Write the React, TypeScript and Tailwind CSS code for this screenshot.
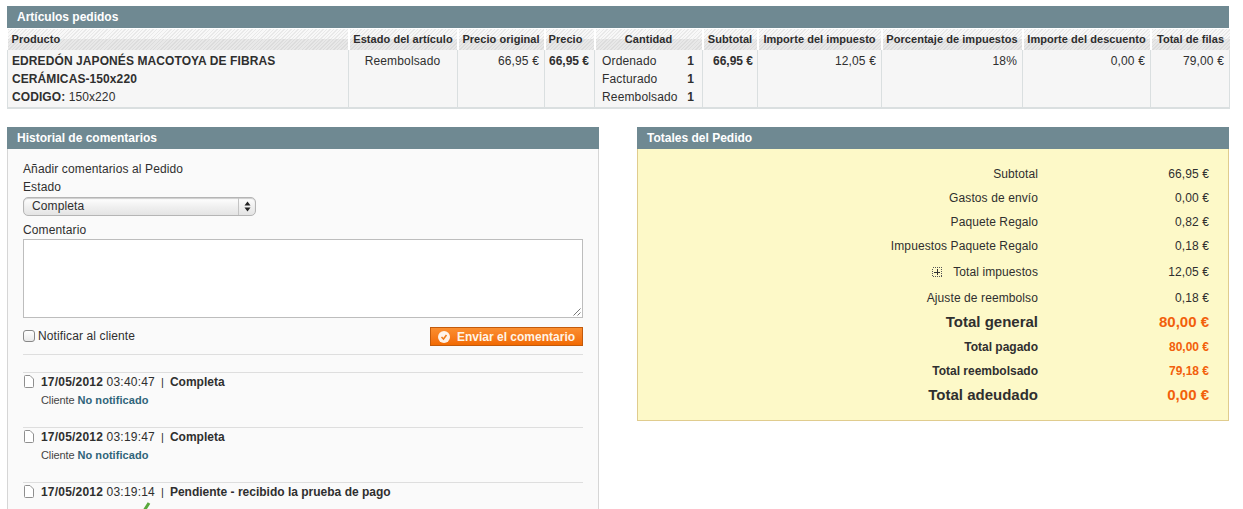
import React from "react";

const cols = [
  { label: "Producto", w: 341, left: "pl-[4px]" },
  { label: "Estado del artículo", w: 109 },
  { label: "Precio original", w: 87 },
  { label: "Precio", w: 50, left: "pl-[3px]" },
  { label: "Cantidad", w: 108 },
  { label: "Subtotal", w: 55 },
  { label: "Importe del impuesto", w: 124 },
  { label: "Porcentaje de impuestos", w: 141 },
  { label: "Importe del descuento", w: 128 },
  { label: "Total de filas", w: 79 },
];

function PanelHead({ children }: { children: React.ReactNode }) {
  return (
    <div className="h-[22px] bg-[#6f8992] pl-[10px] text-[12px] leading-[22px] font-bold text-white">
      {children}
    </div>
  );
}

function Th({ label, left }: { label: string; left?: string }) {
  return (
    <th className="h-[21px] border-r-2 border-white bg-[repeating-linear-gradient(135deg,#e9e9e9_0px,#e9e9e9_1px,#f8f8f8_1px,#f8f8f8_2.500px)] p-0 align-top last:border-r-0">
      <div className="h-[10px]" />
      <div
        className={`h-[11px] bg-[repeating-linear-gradient(135deg,#dcdcdc_0px,#dcdcdc_1px,#e8e8e8_1px,#e8e8e8_2.500px)] text-[11px] leading-[7px] font-bold tracking-[0.05px] whitespace-nowrap text-[#2d2d2d] ${
          left ? `text-left ${left}` : "text-center"
        }`}
      >
        <span className="relative -top-[3px]">{label}</span>
      </div>
    </th>
  );
}

function Td({
  children,
  className = "",
}: {
  children?: React.ReactNode;
  className?: string;
}) {
  return (
    <td
      className={`border-r border-[#dadfe0] pt-[2px] align-top text-[12px] leading-[18px] whitespace-nowrap text-[#2f2f2f] last:border-r-0 ${className}`}
    >
      {children}
    </td>
  );
}

function TotalRow({
  label,
  value,
  labelClass = "text-[12px] tracking-[0.1px]",
  valueClass = "text-[12px] tracking-[0.1px]",
  h,
  icon,
}: {
  label: string;
  value: string;
  labelClass?: string;
  valueClass?: string;
  h: string;
  icon?: boolean;
}) {
  return (
    <div className={`flex items-center ${h}`}>
      <div className={`flex w-[400px] items-center justify-end text-right text-[#2f2f2f] ${labelClass}`}>
        {icon && (
          <svg width="10" height="10" viewBox="0 0 10 10" className="mr-[11px]" shapeRendering="crispEdges">
            <rect x="0.5" y="0.5" width="9" height="9" fill="none" stroke="#555" strokeDasharray="1 1" />
            <path d="M2 5h6M5 2v6" stroke="#333" />
          </svg>
        )}
        {label}
      </div>
      <div className={`w-[171px] text-right ${valueClass}`}>{value}</div>
    </div>
  );
}

function PageIcon() {
  return (
    <svg width="11" height="13" viewBox="0 0 11 13" className="mt-[2px] shrink-0">
      <path d="M1.500 1.500a1 1 0 0 1 1-1H7l3.500 3.500v7.500a1 1 0 0 1-1 1h-7a1 1 0 0 1-1-1z" fill="#fff" stroke="#8f8f8f" />
    </svg>
  );
}

function HistoryHead({ date, time, status }: { date: string; time: string; status: string }) {
  return (
    <div className="flex h-[18px] items-start gap-[7px] text-[12px] leading-[18px] text-[#2f2f2f]">
      <PageIcon />
      <div className="whitespace-nowrap">
        <span className="tracking-[0.2px]">
          <b>{date}</b> {time}
        </span>
        <span className="mx-[6px] inline-block w-[3px] text-center text-[11px]">|</span>
        <b>{status}</b>
      </div>
    </div>
  );
}

function HistoryItem({ date, time, status }: { date: string; time: string; status: string }) {
  return (
    <div className="h-[55px] border-t border-[#dedede]">
      <HistoryHead date={date} time={time} status={status} />
      <div className="pl-[18px] text-[11px] leading-[18px] text-[#444]">
        <span className="tracking-[-0.1px]">Cliente </span>
        <b className="tracking-[0.05px] text-[#2f6479]">No notificado</b>
      </div>
    </div>
  );
}

export default function App() {
  const orange = "font-bold text-[#f2600b]";
  const cell = "pr-[5px] pl-[4px] tracking-[0.15px]";
  return (
    <div
      className="relative h-[509px] w-[1243px] overflow-hidden bg-white pt-[6px] pl-[7px] text-[#2f2f2f]"
      style={{ fontFamily: '"Liberation Sans", Arial, sans-serif' }}
    >
      <section className="w-[1222px]">
        <PanelHead>Artículos pedidos</PanelHead>
        <table className="mt-[1px] w-[1222px] table-fixed border-collapse">
          <colgroup>
            {cols.map((c) => (
              <col key={c.label} style={{ width: c.w }} />
            ))}
          </colgroup>
          <thead>
            <tr>
              {cols.map((c) => (
                <Th key={c.label} label={c.label} left={c.left} />
              ))}
            </tr>
          </thead>
          <tbody>
            <tr className="h-[58px] border-b-2 border-[#dadfe0] bg-[#f6f6f6] [&>td:first-child]:border-l [&>td:last-child]:border-r">
              <Td className="pr-[5px] pl-[4px] font-bold tracking-[0.09px]">
                EDREDÓN JAPONÉS MACOTOYA DE FIBRAS
                <br />
                CERÁMICAS-150x220
                <br />
                CODIGO: <span className="font-normal">150x220</span>
              </Td>
              <Td className={`text-center ${cell}`}>Reembolsado</Td>
              <Td className={`text-right ${cell}`}>66,95 €</Td>
              <Td className="pr-[5px] pl-[2px] text-right font-bold">66,95 €</Td>
              <Td className="pr-[5px] pl-[7px] tracking-[0.15px]">
                <div className="flex justify-between pr-[3px]">
                  <span>Ordenado</span>
                  <b>1</b>
                </div>
                <div className="flex justify-between pr-[3px]">
                  <span>Facturado</span>
                  <b>1</b>
                </div>
                <div className="flex justify-between pr-[3px]">
                  <span>Reembolsado</span>
                  <b>1</b>
                </div>
              </Td>
              <Td className="pr-[4px] pl-[2px] text-right font-bold">66,95 €</Td>
              <Td className={`text-right ${cell}`}>12,05 €</Td>
              <Td className={`text-right ${cell}`}>18%</Td>
              <Td className={`text-right ${cell}`}>0,00 €</Td>
              <Td className={`text-right ${cell}`}>79,00 €</Td>
            </tr>
          </tbody>
        </table>
      </section>

      <div className="mt-[18px] flex items-start gap-[38px]">
        <section className="w-[592px]">
          <PanelHead>Historial de comentarios</PanelHead>
          <div className="h-[400px] border-x border-[#d6d6d6] bg-[#fafafa] px-[15px] pt-[11px] text-[12px] tracking-[0.12px] text-[#2f2f2f]">
            <div className="leading-[18px]">Añadir comentarios al Pedido</div>
            <div className="leading-[18px]">Estado</div>
            <div className="mt-[1px] flex h-[19px] w-[233px] items-center justify-between rounded-[5px] border border-[#b5b5b5] bg-gradient-to-b from-white via-[#f0f0f0] to-[#e4e4e4] pl-[8px] shadow-[inset_0_1px_1px_#ccc]">
              <span className="relative -top-[1px]">Completa</span>
              <span className="flex h-full w-[17px] items-center justify-center border-l border-[#c4c4c4]">
                <svg width="7" height="11" viewBox="0 0 7 11">
                  <path d="M3.500 0.500 6.500 4.500H.5zM3.500 10.500 .5 6.500H6.500z" fill="#222" />
                </svg>
              </span>
            </div>
            <div className="mt-[5px] leading-[18px]">Comentario</div>
            <div className="relative h-[79px] w-[560px] border border-[#bdbdbd] bg-white">
              <svg width="8" height="8" viewBox="0 0 8 8" className="absolute right-[1px] bottom-[1px]">
                <path d="M7.500 .5.500 7.500M7.500 4.500l-3 3" stroke="#777" strokeWidth="1" />
              </svg>
            </div>
            <div className="mt-[8px] flex h-[20px] w-[560px] items-start justify-between">
              <label className="flex h-[19px] items-center gap-[3px]">
                <span className="h-[12px] w-[12px] rounded-[3px] border border-[#888] bg-gradient-to-b from-white to-[#e9e9e9]" />
                <span>Notificar al cliente</span>
              </label>
              <button className="mt-[1px] flex h-[19px] w-[153px] items-center border border-[#c25a0c] bg-gradient-to-b from-[#fb8e2e] to-[#f26a00] pl-[7px] text-[12px] font-bold tracking-normal text-[#fff4e6]">
                <svg width="12" height="12" viewBox="0 0 12 12" className="mr-[7px]">
                  <circle cx="6" cy="6" r="6" fill="#fff" fillOpacity="0.9" />
                  <path d="M3.500 6l2 2 3-4" fill="none" stroke="#f07a16" strokeWidth="1.500" />
                </svg>
                Enviar el comentario
              </button>
            </div>
            <div className="mt-[8px] h-[18px] w-[560px] border-t border-[#dedede]" />
            <div className="w-[560px] tracking-normal">
              <HistoryItem date="17/05/2012" time="03:40:47" status="Completa" />
              <HistoryItem date="17/05/2012" time="03:19:47" status="Completa" />
              <div className="h-[55px] border-t border-[#dedede]">
                <HistoryHead date="17/05/2012" time="03:19:14" status="Pendiente - recibido la prueba de pago" />
                <div className="flex h-[18px] items-center pt-[6px] pl-[18px] text-[11px] text-[#444]">
                  <span>Cliente&nbsp;</span>
                  <b className="text-[#444]">Notificado</b>
                  <svg width="16" height="16" viewBox="0 0 16 16" className="relative -top-[4px] ml-[4px] shrink-0">
                    <path d="M3 9l3 4 7-11" fill="none" stroke="#5aa83c" strokeWidth="3" />
                  </svg>
                </div>
              </div>
            </div>
          </div>
        </section>

        <section className="w-[592px]">
          <PanelHead>Totales del Pedido</PanelHead>
          <div className="h-[272px] border border-t-0 border-[#e0cc8e] bg-[#fdf9c8] pt-[13px]">
            <TotalRow h="h-[24px]" label="Subtotal" value="66,95 €" />
            <TotalRow h="h-[24px]" label="Gastos de envío" value="0,00 €" />
            <TotalRow h="h-[24px]" label="Paquete Regalo" value="0,82 €" />
            <TotalRow h="h-[24px]" label="Impuestos Paquete Regalo" value="0,18 €" />
            <TotalRow h="h-[28px]" label="Total impuestos" value="12,05 €" icon />
            <TotalRow h="h-[24px]" label="Ajuste de reembolso" value="0,18 €" />
            <TotalRow h="h-[24px]" label="Total general" value="80,00 €" labelClass="text-[15px] font-bold" valueClass={`text-[15px] ${orange}`} />
            <TotalRow h="h-[24px] mt-[1px]" label="Total pagado" value="80,00 €" labelClass="text-[12px] font-bold" valueClass={`text-[12px] ${orange}`} />
            <TotalRow h="h-[24px]" label="Total reembolsado" value="79,18 €" labelClass="text-[12px] font-bold" valueClass={`text-[12px] ${orange}`} />
            <TotalRow h="h-[24px]" label="Total adeudado" value="0,00 €" labelClass="text-[15px] font-bold" valueClass={`text-[15px] ${orange}`} />
          </div>
        </section>
      </div>
    </div>
  );
}
